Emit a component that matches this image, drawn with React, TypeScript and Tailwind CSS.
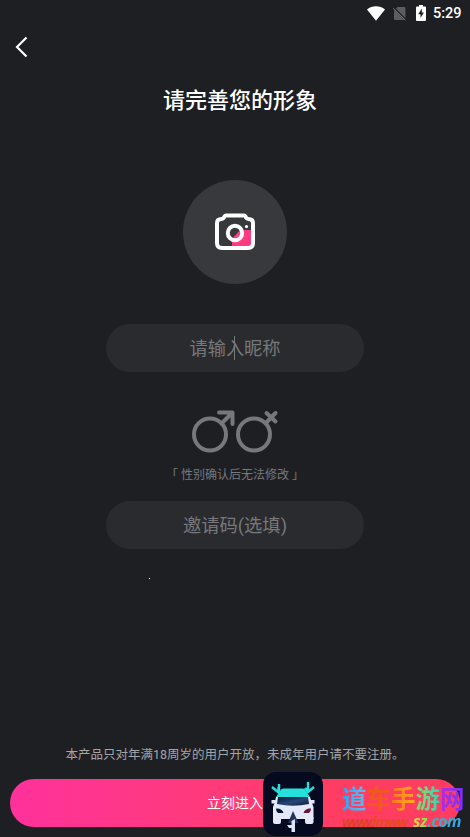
import { useState } from "react";

const StatusBar = () => {
  return (
    <div className="flex h-[26px] items-center justify-end pr-[8px]">
      <svg className="h-[15px] w-[18px]" viewBox="0 0 18 15" fill="#fff">
        <path d="M0 3.4C5.2-.8 12.8-.8 18 3.4L9 14.8z" />
      </svg>
      <svg className="ml-[8px] h-[15px] w-[14px]" viewBox="0 0 14 15">
        <path d="M4.6 1H11.2Q12.4 1 12.4 2.2V14H2.2Q1 14 1 12.8V4.4z" fill="#5c5d60" />
        <path d="M.5 1.5L13 14.2" stroke="#1e1f23" strokeWidth="2" />
        <path d="M.3 2.2L12.6 14.5" stroke="#77787b" strokeWidth="1" />
      </svg>
      <svg className="ml-[9px] h-[16px] w-[10px]" viewBox="0 0 10 16">
        <path d="M3 0H7V1.6H9Q10 1.6 10 2.6V15Q10 16 9 16H1Q0 16 0 15V2.6Q0 1.6 1 1.6H3z" fill="#fff" />
        <path d="M5.8 3.6L2.2 9.2H4.5V13L7.9 7.6H5.8z" fill="#1e1f23" />
      </svg>
      <span className="ml-[7px] w-[29px] pt-px font-['Roboto',sans-serif] text-[14.5px] leading-[26px] font-medium whitespace-nowrap text-white">
        5:29
      </span>
    </div>
  );
};

const CameraIcon = () => {
  return (
    <svg className="h-[38px] w-[42px]" viewBox="0 0 42 38" fill="none">
      <path d="M18 34V26L26 17H37V32L35 34z" fill="#ff3b82" />
      <path
        d="M12.2 2.5H29.8Q31 2.5 31.6 3.7L32.2 4.9Q32.8 6 34.4 6Q39 6 39 10.4V30Q39 35 34 35H8Q3 35 3 30V10.4Q3 6 7.6 6Q9.2 6 9.8 4.9L10.4 3.7Q11 2.5 12.2 2.5z"
        stroke="#fff"
        strokeWidth="4"
        strokeLinejoin="round"
      />
      <circle cx="21" cy="20" r="7.2" stroke="#fff" strokeWidth="4" />
      <circle cx="32.5" cy="13.6" r="1.6" fill="#fff" />
    </svg>
  );
};

const GenderIcons = () => {
  return (
    <svg className="h-[44px] w-[88px]" viewBox="0 0 88 44" fill="none" stroke="#77787b" strokeWidth="4" strokeLinecap="round">
      <circle cx="19" cy="25.5" r="16" />
      <path d="M30.5 14.5L41 4M28 3.5H41.5V15" strokeLinejoin="round" />
      <circle cx="63" cy="25.5" r="16" />
      <path d="M75 14L84.5 4M75.5 4L84.5 12.5" />
    </svg>
  );
};

const CarLogo = () => {
  return (
    <svg className="h-[64px] w-[60px]" viewBox="0 0 60 64">
      <defs>
        <linearGradient id="glass" x1="0" y1="0" x2="1" y2="1">
          <stop offset="0" stopColor="#07162f" />
          <stop offset=".5" stopColor="#264779" />
          <stop offset="1" stopColor="#080d25" />
        </linearGradient>
      </defs>
      <rect width="60" height="64" rx="13" fill="#050a20" />
      <path d="M13 25L18 17.5Q19 16.5 20.5 16.5H39.5Q41 16.5 42 17.5L47 25z" fill="#26e0dc" />
      <path d="M15 25H45L48 35H12z" fill="url(#glass)" />
      <path d="M13 25H15L14 32Q30 35.5 46 32L45 25H47L49 31L50.5 35V47H10V35L11.5 31z" fill="#e3e9f9" />
      <path d="M10 45H18V50Q18 52 16 52H12Q10 52 10 50zM42 45H50.5V50Q50.5 52 48.5 52H44Q42 52 42 50z" fill="#e3e9f9" />
      <path d="M8.5 28H12.5V31.5H8.5zM47.5 28H51.5V31.5H47.5z" fill="#e3e9f9" />
      <path d="M13 36.5Q19 36 20.5 41H15Q13 40 13 36.5z" fill="#081331" />
      <path d="M48 36.5Q42 36 40.5 41H46Q48 40 48 36.5z" fill="#6b1632" />
      <path d="M30 39L35.5 51H25z" fill="#22345c" />
      <path d="M24 53H28.5V49L32 47V60H28.5V56H26z" fill="#dce5f7" />
      <path d="M16 12V20M9 15L15.5 20.5V15M45 10V20M51 15L45 20L42 16" fill="none" stroke="#26e0dc" strokeWidth="2.4" />
    </svg>
  );
};

const Watermark = () => {
  return (
    <div className="flex flex-col font-['Noto_Sans_CJK_SC',sans-serif] whitespace-nowrap">
      <div className="flex h-[27px] text-[24.5px] leading-[27px] font-bold">
        <span className="bg-linear-to-r from-[#13a7ff] to-[#6eb6df] bg-clip-text text-transparent">道</span>
        <span className="text-[#f05a1c]">车</span>
        <span className="bg-linear-to-r from-[#ff7822] to-[#ffad19] bg-clip-text text-transparent">手</span>
        <span className="bg-linear-to-r from-[#8fd85a] to-[#18d6b0] bg-clip-text text-transparent">游</span>
        <span className="bg-linear-to-r from-[#b12bdd] to-[#742dff] bg-clip-text text-transparent">网</span>
      </div>
      <div className="flex h-[20px] items-baseline font-['Open_Sans',sans-serif] text-[16px] leading-[20px] italic">
        <span className="w-[30px] text-[14.5px] font-semibold tracking-[-1.4px] text-[#d8431c]">www.</span>
        <span className="w-[41px] text-[14.5px] font-semibold tracking-[-0.8px] text-[#dd4f14]">lmww</span>
        <span className="bg-linear-to-r from-[#d8dc30] to-[#8ee050] bg-clip-text font-bold tracking-[-0.3px] text-transparent">sz</span>
        <span className="bg-linear-to-r from-[#29bca7] to-[#37a5f5] bg-clip-text pr-1 font-bold tracking-[-0.6px] text-transparent">.com</span>
      </div>
    </div>
  );
};

const App = () => {
  const [nickname, setNickname] = useState("");
  const [inviteCode, setInviteCode] = useState("");

  return (
    <div className="relative flex h-[837px] w-[470px] flex-col overflow-hidden bg-[#1e1f23] font-['Roboto','Noto_Sans_CJK_SC',sans-serif]">
      <StatusBar />
      <header className="flex h-[42px] items-center pl-[15px]">
        <button type="button" aria-label="返回">
          <svg className="h-[22px] w-[14px]" viewBox="0 0 14 22" fill="none" stroke="#fff" strokeWidth="2.2">
            <path d="M11.5 1.5L2 11L11.5 20.5" />
          </svg>
        </button>
      </header>

      <main className="flex flex-col items-center">
        <h1 className="mt-[17px] h-[32px] pl-[10px] text-[22px] leading-[32px] font-medium text-white">请完善您的形象</h1>

        <button type="button" className="mt-[63px] flex size-[104px] items-center justify-center rounded-full bg-[#38393d]">
          <CameraIcon />
        </button>

        <div className="relative mt-[40px] h-[48px] w-[258px]">
          <input
            type="text"
            value={nickname}
            onChange={(e) => setNickname(e.target.value)}
            placeholder="请输入昵称"
            className="h-full w-full rounded-full bg-[#2a2b2f] text-center text-[18.2px] text-white outline-none placeholder:text-[#77787b]"
          />
          <span className="absolute top-[12px] left-[128px] h-[24px] w-px bg-[#77787b]" />
        </div>

        <div className="mt-[37px] h-[44px]">
          <GenderIcons />
        </div>
        <p className="mt-[12px] h-[20px] text-[12px] leading-[20px] whitespace-pre text-[#77787b]">「 性别确认后无法修改 」</p>

        <input
          type="text"
          value={inviteCode}
          onChange={(e) => setInviteCode(e.target.value)}
          placeholder="邀请码(选填)"
          className="mt-[16px] h-[48px] w-[258px] rounded-full bg-[#2a2b2f] text-center text-[18.3px] text-white outline-none placeholder:text-[#77787b]"
        />
        <span className="mt-[29px] mr-[171px] size-px bg-white" />
      </main>

      <footer className="mt-auto flex flex-col items-center pb-[10px]">
        <p className="mb-[14px] h-[20px] text-[12.5px] leading-[20px] whitespace-nowrap text-[#a4a5a7]">
          本产品只对年满18周岁的用户开放，未成年用户请不要注册。
        </p>
        <button
          type="button"
          className="h-[48px] w-[450px] rounded-full bg-linear-to-r from-[#ff319b] to-[#ff3d60] to-75% text-[14px] text-white"
        >
          立刻进入
        </button>
      </footer>

      <div className="absolute top-[772px] left-[263px]">
        <CarLogo />
      </div>
      <div className="absolute top-[784px] left-[342px]">
        <Watermark />
      </div>
    </div>
  );
};

export default App;
